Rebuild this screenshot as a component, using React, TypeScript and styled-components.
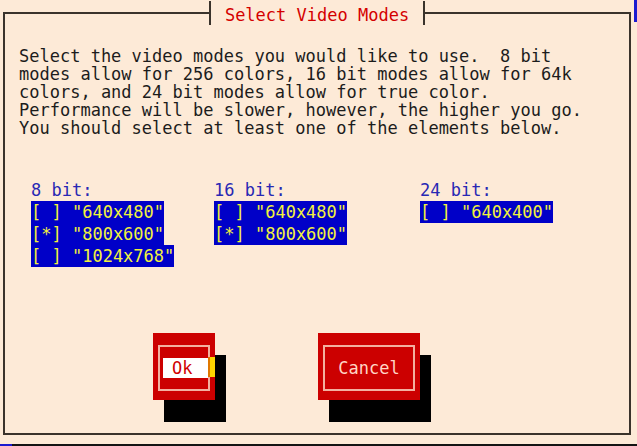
import React from "react";
import styled, { createGlobalStyle } from "styled-components";

const MONO = `"DejaVu Sans Mono", "Liberation Mono", monospace`;
const LINE = "#3a332b";
const PEACH = "#fdead7";

const Global = createGlobalStyle`
  html, body { margin: 0; padding: 0; background: ${PEACH}; }
  body { font-family: ${MONO}; }
`;

const Screen = styled.div`
  width: 637px;
  height: 446px;
  display: flex;
  flex-direction: column;
  overflow: hidden;
  background: ${PEACH};
`;

const Workspace = styled.div`
  flex: 1;
  display: flex;
`;

const DialogArea = styled.div`
  flex: 1;
  padding: 0 3px;
  display: flex;
  flex-direction: column;
`;

const RightEdge = styled.div`
  width: 3px;
  display: flex;
  flex-direction: column;
`;

const EdgeTick = styled.div`
  height: 22px;
  background: #1a1ad0;
`;

const BottomEdge = styled.div`
  height: 2px;
  background: #141414;
  display: flex;
`;

const BottomTick = styled.div`
  width: 12px;
  background: #1a1ad0;
`;

const Header = styled.div`
  display: flex;
  height: 26px;
`;

const HeaderLine = styled.div<{ $side: "left" | "right" }>`
  flex: 1;
  margin-top: 12px;
  border-top: 2px solid ${LINE};
  ${(p) =>
    p.$side === "left"
      ? `border-left: 2px solid ${LINE};`
      : `border-right: 2px solid ${LINE};`}
`;

const Tee = styled.div`
  width: 2px;
  margin: 1px 0;
  background: ${LINE};
`;

const Title = styled.h1`
  margin: 0;
  padding: 4px 14px 0;
  font: normal 17px/22px ${MONO};
  color: #d40000;
  white-space: pre;
`;

const Body = styled.div`
  flex: 0 0 409px;
  box-sizing: border-box;
  border: 2px solid ${LINE};
  border-top: none;
  display: flex;
  flex-direction: column;
`;

const Prompt = styled.p`
  margin: 21px 0 0 14px;
  font: 17px/18px ${MONO};
  color: #1c1c1c;
  white-space: pre;
`;

const Groups = styled.div`
  display: grid;
  grid-template-columns: 183px 206px auto;
  margin: 43px 0 0 26px;
`;

const Group = styled.div`
  display: flex;
  flex-direction: column;
  align-items: flex-start;
`;

const GroupLabel = styled.div`
  font: 17px/20px ${MONO};
  color: #2828b4;
  margin-bottom: 1px;
  white-space: pre;
`;

const Option = styled.div`
  background: #0000c8;
  color: #f2f23c;
  font: 17px/22px ${MONO};
  white-space: pre;
`;

const ButtonRow = styled.div`
  display: flex;
  gap: 103px;
  margin: 66px 0 0 148px;
`;

const Button = styled.button<{ $width: number }>`
  position: relative;
  box-sizing: border-box;
  width: ${(p) => p.$width}px;
  height: 67px;
  padding: 12px 5px 9px 5px;
  border: none;
  background: #cc0000;
  box-shadow: 11px 22px 0 #000;
  display: flex;
  cursor: pointer;
`;

const InnerFrame = styled.div<{ $align: "start" | "center" }>`
  flex: 1;
  border: 2px solid #f3b0a0;
  display: flex;
  align-items: center;
  justify-content: ${(p) => (p.$align === "start" ? "flex-start" : "center")};
`;

const ActiveLabel = styled.span`
  box-sizing: border-box;
  width: 45px;
  height: 20px;
  margin-left: 3px;
  padding-left: 9px;
  background: #ffffff;
  color: #d00000;
  font: 17px/20px ${MONO};
  text-align: left;
  flex-shrink: 0;
`;

const ButtonLabel = styled.span`
  color: #ffd6c6;
  font: 17px/20px ${MONO};
`;

const Cursor = styled.span`
  position: absolute;
  right: 0;
  top: 24px;
  width: 7px;
  height: 20px;
  background: linear-gradient(to right, #e07800 0 2px, #ffd400 2px);
`;

const groups = [
  { label: "8 bit:", options: ['[ ] "640x480"', '[*] "800x600"', '[ ] "1024x768"'] },
  { label: "16 bit:", options: ['[ ] "640x480"', '[*] "800x600"'] },
  { label: "24 bit:", options: ['[ ] "640x400"'] },
];

const promptLines = [
  "Select the video modes you would like to use.  8 bit",
  "modes allow for 256 colors, 16 bit modes allow for 64k",
  "colors, and 24 bit modes allow for true color.",
  "Performance will be slower, however, the higher you go.",
  "You should select at least one of the elements below.",
];

export default function App() {
  return (
    <>
      <Global />
      <Screen>
        <Workspace>
          <DialogArea>
            <Header>
              <HeaderLine $side="left" />
              <Tee />
              <Title>Select Video Modes</Title>
              <Tee />
              <HeaderLine $side="right" />
            </Header>
            <Body>
              <Prompt>{promptLines.join("\n")}</Prompt>
              <Groups>
                {groups.map((g) => (
                  <Group key={g.label}>
                    <GroupLabel>{g.label}</GroupLabel>
                    {g.options.map((o) => (
                      <Option key={o}>{o}</Option>
                    ))}
                  </Group>
                ))}
              </Groups>
              <ButtonRow>
                <Button $width={62}>
                  <InnerFrame $align="start">
                    <ActiveLabel>Ok</ActiveLabel>
                  </InnerFrame>
                  <Cursor />
                </Button>
                <Button $width={102}>
                  <InnerFrame $align="center">
                    <ButtonLabel>Cancel</ButtonLabel>
                  </InnerFrame>
                </Button>
              </ButtonRow>
            </Body>
          </DialogArea>
          <RightEdge>
            <EdgeTick />
          </RightEdge>
        </Workspace>
        <BottomEdge>
          <BottomTick />
        </BottomEdge>
      </Screen>
    </>
  );
}
